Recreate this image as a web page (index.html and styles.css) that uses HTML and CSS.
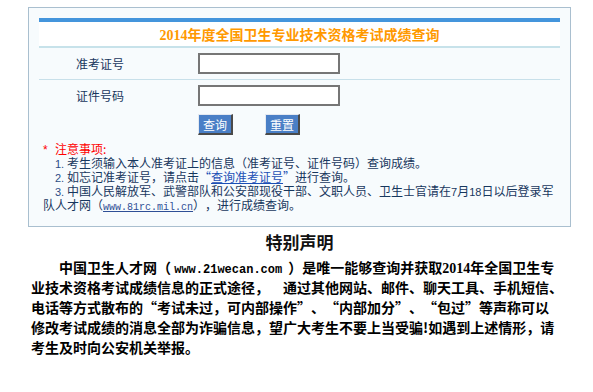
FILE: index.html
```html
<!DOCTYPE html>
<html lang="zh-CN">
<head>
<meta charset="utf-8">
<title>2014年度全国卫生专业技术资格考试成绩查询</title>
<link rel="stylesheet" href="styles.css">
</head>
<body>
<div class="page">
  <div class="box">
    <div class="bar"></div>
    <div class="title"><span class="num">2014</span>年度全国卫生专业技术资格考试成绩查询</div>
    <div class="row row-first">
      <label class="label" for="zkz">准考证号</label>
      <input class="field" id="zkz" type="text">
    </div>
    <div class="row">
      <label class="label" for="zjh">证件号码</label>
      <input class="field" id="zjh" type="text">
    </div>
    <div class="actions">
      <button class="btn" type="button">查询</button>
      <button class="btn" type="button">重置</button>
    </div>
    <div class="notes">
      <p class="notes-head"><span class="star">*</span>注意事项:</p>
      <p class="item"><span class="n">1.</span>考生须输入本人准考证上的信息（准考证号、证件号码）查询成绩。</p>
      <p class="item"><span class="n">2.</span>如忘记准考证号，请点击<a class="link" href="#"><span class="q q-open">“</span>查询准考证号<span class="q">”</span></a>进行查询。</p>
      <p class="item"><span class="n">3.</span>中国人民解放军、武警部队和公安部现役干部、文职人员、卫生士官请在<span class="d">7</span>月<span class="d">18</span>日以后登录军队人才网（<a class="url" href="#">www.81rc.mil.cn</a>），进行成绩查询。</p>
    </div>
  </div>
  <h2 class="decl-title">特别声明</h2>
  <p class="decl">中国卫生人才网（ <span class="decl-url">www.21wecan.com</span>）是唯一能够查询并获取<span class="num">2014</span>年全国卫生专业技术资格考试成绩信息的正式途径，　通过其他网站、邮件、聊天工具、手机短信、电话等方式散布的<span class="q q-open">“</span>考试未过，可内部操作<span class="q">”</span>、<span class="q q-open">“</span>内部加分<span class="q">”</span>、<span class="q q-open">“</span>包过<span class="q">”</span>等声称可以<br>修改考试成绩的消息全部为诈骗信息，望广大考生不要上当受骗!如遇到上述情形，请<br>考生及时向公安机关举报。</p>
</div>
</body>
</html>
```
FILE: styles.css
```css
html, body {
  margin: 0;
  padding: 0;
  background: #ffffff;
}
body {
  font-family: "Noto Sans CJK SC", "Liberation Sans", sans-serif;
  font-size: 12px;
  color: #17375e;
  text-spacing-trim: space-all;
}
.page {
  width: 543px;
  margin: 7px 0 0 28px;
}
.box {
  border: 1px solid #a9bfcf;
  background: #f7fbfd;
  padding: 10px 10px 14px 10px;
}
.bar {
  height: 4px;
  background: #4495dc;
}
.title {
  height: 24px;
  line-height: 24px;
  background: #ffffff;
  border-bottom: 2px solid #c7e2ea;
  text-align: center;
  color: #ff9900;
  font-size: 14px;
  font-weight: bold;
}
.num {
  font-family: "Liberation Serif", serif;
  font-weight: bold;
  line-height: 0;
}
.row {
  display: grid;
  grid-template-columns: 159px 1fr;
  align-items: center;
  height: 31px;
}
.row-first {
  border-bottom: 1px solid #c8e0ea;
}
.label {
  padding-left: 37px;
  font-size: 12px;
  color: #17375e;
}
.field {
  box-sizing: border-box;
  width: 142px;
  height: 21px;
  margin: 0;
  border: 2px solid #767676;
  background: #ffffff;
}
.actions {
  display: flex;
  gap: 32px;
  padding: 3px 0 0 159px;
}
.btn {
  box-sizing: border-box;
  width: 35px;
  height: 21px;
  padding: 0;
  margin: 0;
  background: #4a7fc6;
  color: #ffffff;
  font-family: "Noto Sans CJK SC", sans-serif;
  font-size: 12px;
  line-height: 17px;
  border-style: solid;
  border-width: 1px 2px 2px 1px;
  border-color: #e4e9f1 #4a4a4a #4a4a4a #e4e9f1;
}
.notes {
  margin-top: 7px;
  padding-left: 4px;
  line-height: 14px;
}
.notes p {
  margin: 0;
}
.notes-head {
  color: #ff0000;
}
.star {
  display: inline-block;
  width: 12px;
  line-height: 0;
  font-family: "Liberation Sans", sans-serif;
}
.item {
  text-indent: 12px;
}
.n {
  display: inline-block;
  text-indent: 0;
  width: 12px;
  line-height: 0;
  font-family: "Liberation Sans", sans-serif;
  font-size: 11px;
  color: #2c4d85;
}
.d {
  font-family: "Liberation Sans", sans-serif;
  font-size: 11px;
  line-height: 0;
}
.q {
  display: inline-block;
  width: 1em;
  text-indent: 0;
  text-align: left;
  line-height: 0;
}
.q-open {
  text-align: right;
}
.link .q {
  width: 12px;
}
.link {
  color: #1b4fb5;
  text-decoration: underline;
}
.url {
  color: #2f4f96;
  font-family: "Liberation Mono", monospace;
  font-size: 10px;
  line-height: 0;
  text-decoration: underline;
}
.decl-title {
  margin: 5px 0 0 0;
  text-align: center;
  font-size: 17px;
  line-height: 20px;
  font-weight: bold;
  color: #111111;
}
.decl {
  margin: 5px 0 0 3px;
  width: 536px;
  text-indent: 28px;
  font-size: 14px;
  line-height: 20px;
  font-weight: bold;
  color: #000000;
}
.decl-url {
  font-family: "Liberation Mono", monospace;
  font-size: 12px;
  line-height: 0;
  margin-right: 6px;
}
```
